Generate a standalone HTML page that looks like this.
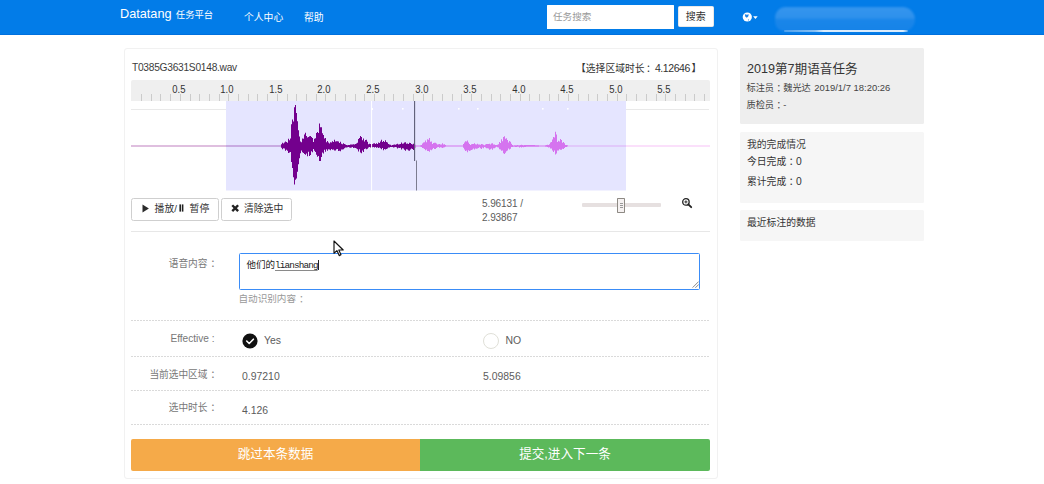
<!DOCTYPE html>
<html lang="zh-CN">
<head>
<meta charset="utf-8">
<title>Datatang 任务平台</title>
<style>
*{box-sizing:border-box;margin:0;padding:0}
html,body{width:1044px;height:484px;overflow:hidden;background:#fff}
body{position:relative;font-family:"Liberation Sans","Noto Sans CJK SC",sans-serif;font-size:9.8px;color:#333;line-height:1}
.abs{position:absolute;white-space:nowrap}
.nav{left:0;top:0;width:1044px;height:34.8px;background:#027ce8;border-bottom:1px solid #0070de}
.nav .t{color:#fff}
.brand{left:120px;top:5.5px;font-size:12.7px;line-height:16px}
.brand span{font-size:9.3px;position:relative;top:0px;margin-left:0.8px}
.nl{top:11px;font-size:9.8px;line-height:14px}
.search{left:547px;top:5px;width:127px;height:23.8px;background:#fff;border-radius:.5px}
.search span{position:absolute;left:6px;top:4.5px;font-size:9.6px;line-height:13px;color:#999}
.sbtn{left:677.6px;top:5.8px;width:36.2px;height:21.6px;background:#fff;border:1px solid #e8e8e8;border-radius:1.5px;text-align:center;font-size:10px;line-height:19.6px;color:#333}
.blur{left:775px;top:6.5px;width:140px;height:25.5px;border-radius:12px 14px 14px 12px;background:linear-gradient(180deg,#3595ee 0%,#2e91ec 44%,#1a86e9 50%,#1683e8 100%);filter:blur(1.1px)}
.blurline{left:784px;top:30.3px;width:124px;height:1.5px;background:linear-gradient(90deg,rgba(255,255,255,.25) 0%,rgba(255,255,255,.5) 25%,rgba(255,255,255,.85) 32%,rgba(255,255,255,.85) 96%,rgba(255,255,255,.3) 100%);border-radius:1px;filter:blur(.4px)}
.panel{left:124px;top:48px;width:594px;height:431px;border:1px solid #f1f1f1;border-radius:3px;background:#fff}
.fname{left:132px;top:61px;font-size:10.2px;letter-spacing:-.26px;line-height:13px;color:#3c3c3c}
.seltime{left:576px;top:61.6px;font-size:9.8px;line-height:13px;color:#333}
.timeline{left:131px;top:80px;width:579px;height:21px;background:#efefef;border-radius:2px 2px 0 0}
.wave{left:131px;top:101px;width:579px;height:90px}
.btn{top:198px;height:23px;background:#fff;border:1px solid #cfcfcf;border-radius:2.5px;font-size:9.6px;line-height:21px;color:#333;text-align:center}
.bt{top:201.9px;font-size:9.8px;line-height:13px;color:#333}
.c{position:relative;left:3px}
.n{font-size:10.5px;letter-spacing:-.42px;margin-left:.5px;margin-right:1.5px}
.hr{left:131px;width:579px;height:1px;background:#e7e7e7}
.dot{left:131px;width:579px;height:1px;background:repeating-linear-gradient(90deg,#dadada 0,#dadada 2px,transparent 2px,transparent 3px)}
.lbl{width:90px;left:127.2px;text-align:right;font-size:9.7px;line-height:13px;color:#777}
.val{font-size:10.45px;line-height:13px;color:#5c5c5c}
.side{left:739.5px;width:184.5px;border-radius:1.5px}
.big{height:31.9px;top:439.2px;font-size:12.6px;line-height:31px;color:#fff;text-align:center}
</style>
</head>
<body>
<!-- navbar -->
<div class="abs nav">
  <div class="abs t brand">Datatang <span>任务平台</span></div>
  <div class="abs t nl" style="left:244px">个人中心</div>
  <div class="abs t nl" style="left:304px">帮助</div>
  <div class="abs search"><span>任务搜索</span></div>
  <div class="abs sbtn">搜索</div>
  <svg class="abs" style="left:742px;top:10.5px" width="20" height="12" viewBox="0 0 20 12">
    <circle cx="5.3" cy="6" r="4.6" fill="#fff"/>
    <path d="M2.8 3.4 L4.2 3.2 L4.9 4.3 L5.8 3.3 L6.8 3.6 L6.2 5.6 L4.8 6.8 L3.4 5.8Z" fill="#1c82e6"/>
    <circle cx="6.5" cy="8.9" r=".55" fill="#4a9bec"/>
    <path d="M11.1 5.2 L15.7 5.2 L13.4 7.9Z" fill="#fff"/>
  </svg>
  <div class="abs blur"></div>
  <div class="abs blurline"></div>
</div>

<!-- main panel -->
<div class="abs panel"></div>
<div class="abs fname">T0385G3631S0148.wav</div>
<div class="abs seltime">【选择区域时长<span class="c" style="left:1.5px">：</span><span class="n">4.12646</span>】</div>

<svg class="abs timeline" viewBox="0 0 579 21" width="579" height="21">
  <g fill="#cbcbcb"><rect x="10" y="14" width="1" height="7"/><rect x="20" y="14" width="1" height="7"/><rect x="29" y="14" width="1" height="7"/><rect x="39" y="14" width="1" height="7"/><rect x="49" y="14" width="1" height="7"/><rect x="59" y="14" width="1" height="7"/><rect x="68" y="14" width="1" height="7"/><rect x="78" y="14" width="1" height="7"/><rect x="88" y="14" width="1" height="7"/><rect x="97" y="14" width="1" height="7"/><rect x="107" y="14" width="1" height="7"/><rect x="117" y="14" width="1" height="7"/><rect x="126" y="14" width="1" height="7"/><rect x="136" y="14" width="1" height="7"/><rect x="146" y="14" width="1" height="7"/><rect x="156" y="14" width="1" height="7"/><rect x="165" y="14" width="1" height="7"/><rect x="175" y="14" width="1" height="7"/><rect x="185" y="14" width="1" height="7"/><rect x="194" y="14" width="1" height="7"/><rect x="204" y="14" width="1" height="7"/><rect x="214" y="14" width="1" height="7"/><rect x="224" y="14" width="1" height="7"/><rect x="233" y="14" width="1" height="7"/><rect x="243" y="14" width="1" height="7"/><rect x="253" y="14" width="1" height="7"/><rect x="262" y="14" width="1" height="7"/><rect x="272" y="14" width="1" height="7"/><rect x="282" y="14" width="1" height="7"/><rect x="292" y="14" width="1" height="7"/><rect x="301" y="14" width="1" height="7"/><rect x="311" y="14" width="1" height="7"/><rect x="321" y="14" width="1" height="7"/><rect x="330" y="14" width="1" height="7"/><rect x="340" y="14" width="1" height="7"/><rect x="350" y="14" width="1" height="7"/><rect x="360" y="14" width="1" height="7"/><rect x="369" y="14" width="1" height="7"/><rect x="379" y="14" width="1" height="7"/><rect x="389" y="14" width="1" height="7"/><rect x="398" y="14" width="1" height="7"/><rect x="408" y="14" width="1" height="7"/><rect x="418" y="14" width="1" height="7"/><rect x="427" y="14" width="1" height="7"/><rect x="437" y="14" width="1" height="7"/><rect x="447" y="14" width="1" height="7"/><rect x="457" y="14" width="1" height="7"/><rect x="466" y="14" width="1" height="7"/><rect x="476" y="14" width="1" height="7"/><rect x="486" y="14" width="1" height="7"/><rect x="495" y="14" width="1" height="7"/><rect x="505" y="14" width="1" height="7"/><rect x="515" y="14" width="1" height="7"/><rect x="525" y="14" width="1" height="7"/><rect x="534" y="14" width="1" height="7"/><rect x="544" y="14" width="1" height="7"/><rect x="554" y="14" width="1" height="7"/><rect x="563" y="14" width="1" height="7"/><rect x="573" y="14" width="1" height="7"/></g>
  <g font-family="Liberation Sans, sans-serif" font-size="10" fill="#333" text-anchor="middle"><text transform="translate(47.9 12.7) scale(0.95 1)">0.5</text><text transform="translate(95.9 12.7) scale(0.95 1)">1.0</text><text transform="translate(144.9 12.7) scale(0.95 1)">1.5</text><text transform="translate(192.9 12.7) scale(0.95 1)">2.0</text><text transform="translate(241.9 12.7) scale(0.95 1)">2.5</text><text transform="translate(290.9 12.7) scale(0.95 1)">3.0</text><text transform="translate(338.9 12.7) scale(0.95 1)">3.5</text><text transform="translate(387.9 12.7) scale(0.95 1)">4.0</text><text transform="translate(435.9 12.7) scale(0.95 1)">4.5</text><text transform="translate(484.9 12.7) scale(0.95 1)">5.0</text><text transform="translate(532.9 12.7) scale(0.95 1)">5.5</text></g>
</svg>

<svg class="abs wave" viewBox="0 0 579 90" width="579" height="90">
  <rect x="0" y="8" width="95" height="1" fill="#e9e9e9"/><rect x="495" y="8" width="83" height="1" fill="#e9e9e9"/>
  
  <path d="M284.0 43.8 L285.0 43.8 L285.0 44.6 L286.0 44.6 L286.0 44.6 L287.0 44.6 L287.0 44.6 L288.0 44.6 L288.0 44.6 L289.0 44.6 L289.0 44.2 L290.0 44.2 L290.0 43.9 L291.0 43.9 L291.0 42.5 L292.0 42.5 L292.0 41.4 L293.0 41.4 L293.0 41.2 L294.0 41.2 L294.0 39.5 L295.0 39.5 L295.0 41.2 L296.0 41.2 L296.0 38.2 L297.0 38.2 L297.0 38.7 L298.0 38.7 L298.0 37.0 L299.0 37.0 L299.0 40.8 L300.0 40.8 L300.0 40.5 L301.0 40.5 L301.0 42.9 L302.0 42.9 L302.0 42.0 L303.0 42.0 L303.0 41.7 L304.0 41.7 L304.0 41.8 L305.0 41.8 L305.0 42.6 L306.0 42.6 L306.0 43.5 L307.0 43.5 L307.0 43.3 L308.0 43.3 L308.0 43.0 L309.0 43.0 L309.0 43.5 L310.0 43.5 L310.0 43.5 L311.0 43.5 L311.0 42.3 L312.0 42.3 L312.0 43.4 L313.0 43.4 L313.0 43.3 L314.0 43.3 L314.0 44.1 L315.0 44.1 L315.0 44.4 L316.0 44.4 L316.0 44.6 L317.0 44.6 L317.0 44.6 L318.0 44.6 L318.0 44.6 L319.0 44.6 L319.0 44.6 L320.0 44.6 L320.0 44.6 L321.0 44.6 L321.0 44.6 L322.0 44.6 L322.0 44.6 L323.0 44.6 L323.0 44.6 L324.0 44.6 L324.0 44.6 L325.0 44.6 L325.0 44.6 L326.0 44.6 L326.0 44.6 L327.0 44.6 L327.0 44.6 L328.0 44.6 L328.0 44.6 L329.0 44.6 L329.0 44.6 L330.0 44.6 L330.0 44.6 L331.0 44.6 L331.0 44.6 L332.0 44.6 L332.0 43.0 L333.0 43.0 L333.0 41.4 L334.0 41.4 L334.0 40.2 L335.0 40.2 L335.0 40.6 L336.0 40.6 L336.0 39.6 L337.0 39.6 L337.0 41.6 L338.0 41.6 L338.0 42.9 L339.0 42.9 L339.0 43.9 L340.0 43.9 L340.0 43.2 L341.0 43.2 L341.0 42.9 L342.0 42.9 L342.0 42.9 L343.0 42.9 L343.0 42.3 L344.0 42.3 L344.0 43.3 L345.0 43.3 L345.0 43.6 L346.0 43.6 L346.0 42.7 L347.0 42.7 L347.0 43.5 L348.0 43.5 L348.0 43.5 L349.0 43.5 L349.0 43.7 L350.0 43.7 L350.0 43.0 L351.0 43.0 L351.0 43.3 L352.0 43.3 L352.0 43.7 L353.0 43.7 L353.0 44.2 L354.0 44.2 L354.0 43.6 L355.0 43.6 L355.0 43.0 L356.0 43.0 L356.0 43.0 L357.0 43.0 L357.0 42.9 L358.0 42.9 L358.0 42.7 L359.0 42.7 L359.0 43.6 L360.0 43.6 L360.0 42.6 L361.0 42.6 L361.0 42.3 L362.0 42.3 L362.0 43.6 L363.0 43.6 L363.0 43.4 L364.0 43.4 L364.0 43.9 L365.0 43.9 L365.0 44.1 L366.0 44.1 L366.0 43.7 L367.0 43.7 L367.0 43.3 L368.0 43.3 L368.0 41.1 L369.0 41.1 L369.0 41.9 L370.0 41.9 L370.0 38.3 L371.0 38.3 L371.0 40.2 L372.0 40.2 L372.0 35.9 L373.0 35.9 L373.0 35.2 L374.0 35.2 L374.0 37.8 L375.0 37.8 L375.0 37.3 L376.0 37.3 L376.0 39.1 L377.0 39.1 L377.0 41.6 L378.0 41.6 L378.0 40.0 L379.0 40.0 L379.0 40.8 L380.0 40.8 L380.0 42.8 L381.0 42.8 L381.0 44.0 L382.0 44.0 L382.0 44.4 L383.0 44.4 L383.0 44.3 L384.0 44.3 L384.0 44.2 L385.0 44.2 L385.0 44.2 L386.0 44.2 L386.0 44.1 L387.0 44.1 L387.0 44.3 L388.0 44.3 L388.0 44.3 L389.0 44.3 L389.0 43.9 L390.0 43.9 L390.0 43.8 L391.0 43.8 L391.0 43.9 L392.0 43.9 L392.0 44.2 L393.0 44.2 L393.0 44.0 L394.0 44.0 L394.0 44.1 L395.0 44.1 L395.0 44.1 L396.0 44.1 L396.0 44.1 L397.0 44.1 L397.0 44.1 L398.0 44.1 L398.0 44.1 L399.0 44.1 L399.0 44.1 L400.0 44.1 L400.0 44.1 L401.0 44.1 L401.0 44.1 L402.0 44.1 L402.0 44.1 L403.0 44.1 L403.0 44.1 L404.0 44.1 L404.0 44.2 L405.0 44.2 L405.0 44.2 L406.0 44.2 L406.0 44.2 L407.0 44.2 L407.0 44.2 L408.0 44.2 L408.0 44.5 L409.0 44.5 L409.0 44.5 L410.0 44.5 L410.0 44.5 L411.0 44.5 L411.0 44.5 L412.0 44.5 L412.0 44.4 L413.0 44.4 L413.0 44.4 L414.0 44.4 L414.0 44.2 L415.0 44.2 L415.0 44.0 L416.0 44.0 L416.0 43.8 L417.0 43.8 L417.0 43.9 L418.0 43.9 L418.0 43.3 L419.0 43.3 L419.0 41.5 L420.0 41.5 L420.0 41.0 L421.0 41.0 L421.0 38.6 L422.0 38.6 L422.0 36.1 L423.0 36.1 L423.0 36.5 L424.0 36.5 L424.0 30.8 L425.0 30.8 L425.0 33.5 L426.0 33.5 L426.0 41.0 L427.0 41.0 L427.0 39.7 L428.0 39.7 L428.0 40.5 L429.0 40.5 L429.0 37.9 L430.0 37.9 L430.0 39.0 L431.0 39.0 L431.0 41.7 L432.0 41.7 L432.0 40.9 L433.0 40.9 L433.0 42.3 L434.0 42.3 L434.0 44.0 L435.0 44.0 L435.0 44.1 L436.0 44.1 L436.0 44.3 L437.0 44.3 L437.0 44.7 L438.0 44.7 L438.0 44.7 L439.0 44.7 L439.0 44.7 L440.0 44.7 L440.0 44.7 L441.0 44.7 L441.0 44.7 L442.0 44.7 L442.0 44.7 L443.0 44.7 L443.0 44.7 L444.0 44.7 L444.0 44.7 L445.0 44.7 L445.0 44.7 L446.0 44.7 L446.0 44.7 L447.0 44.7 L447.0 44.7 L448.0 44.7 L448.0 44.7 L449.0 44.7 L449.0 44.7 L450.0 44.7 L450.0 44.7 L451.0 44.7 L451.0 44.7 L452.0 44.7 L452.0 44.7 L453.0 44.7 L453.0 44.7 L454.0 44.7 L454.0 44.7 L455.0 44.7 L455.0 44.7 L456.0 44.7 L456.0 44.7 L457.0 44.7 L457.0 44.7 L458.0 44.7 L458.0 44.7 L459.0 44.7 L459.0 44.7 L460.0 44.7 L460.0 44.7 L461.0 44.7 L461.0 44.7 L462.0 44.7 L462.0 44.7 L463.0 44.7 L463.0 44.7 L464.0 44.7 L464.0 44.7 L465.0 44.7 L465.0 44.7 L466.0 44.7 L466.0 44.7 L467.0 44.7 L467.0 44.7 L468.0 44.7 L468.0 44.7 L469.0 44.7 L469.0 44.7 L470.0 44.7 L470.0 44.7 L471.0 44.7 L471.0 44.7 L472.0 44.7 L472.0 44.7 L473.0 44.7 L473.0 44.7 L474.0 44.7 L474.0 44.7 L475.0 44.7 L475.0 44.7 L476.0 44.7 L476.0 44.7 L477.0 44.7 L477.0 44.7 L478.0 44.7 L478.0 44.7 L479.0 44.7 L479.0 44.7 L480.0 44.7 L480.0 44.7 L481.0 44.7 L481.0 44.7 L482.0 44.7 L482.0 44.7 L483.0 44.7 L483.0 44.7 L484.0 44.7 L484.0 44.7 L485.0 44.7 L485.0 44.7 L486.0 44.7 L486.0 44.7 L487.0 44.7 L487.0 44.7 L488.0 44.7 L488.0 44.7 L489.0 44.7 L489.0 44.7 L490.0 44.7 L490.0 44.7 L491.0 44.7 L491.0 44.7 L492.0 44.7 L492.0 44.7 L493.0 44.7 L493.0 44.7 L494.0 44.7 L494.0 44.7 L495.0 44.7 L495.0 44.7 L496.0 44.7 L496.0 44.7 L497.0 44.7 L497.0 44.7 L498.0 44.7 L498.0 44.7 L499.0 44.7 L499.0 44.7 L500.0 44.7 L500.0 44.7 L501.0 44.7 L501.0 44.7 L502.0 44.7 L502.0 44.7 L503.0 44.7 L503.0 44.7 L504.0 44.7 L504.0 44.7 L505.0 44.7 L505.0 44.7 L506.0 44.7 L506.0 44.7 L507.0 44.7 L507.0 44.7 L508.0 44.7 L508.0 44.7 L509.0 44.7 L509.0 44.7 L510.0 44.7 L510.0 44.7 L511.0 44.7 L511.0 44.7 L512.0 44.7 L512.0 44.7 L513.0 44.7 L513.0 44.7 L514.0 44.7 L514.0 44.7 L515.0 44.7 L515.0 44.7 L516.0 44.7 L516.0 44.7 L517.0 44.7 L517.0 44.7 L518.0 44.7 L518.0 44.7 L519.0 44.7 L519.0 44.7 L520.0 44.7 L520.0 44.7 L521.0 44.7 L521.0 44.7 L522.0 44.7 L522.0 44.7 L523.0 44.7 L523.0 44.7 L524.0 44.7 L524.0 44.7 L525.0 44.7 L525.0 44.7 L526.0 44.7 L526.0 44.7 L527.0 44.7 L527.0 44.7 L528.0 44.7 L528.0 44.7 L529.0 44.7 L529.0 44.7 L530.0 44.7 L530.0 44.7 L531.0 44.7 L531.0 44.7 L532.0 44.7 L532.0 44.7 L533.0 44.7 L533.0 44.7 L534.0 44.7 L534.0 44.7 L535.0 44.7 L535.0 44.7 L536.0 44.7 L536.0 44.7 L537.0 44.7 L537.0 44.7 L538.0 44.7 L538.0 44.7 L539.0 44.7 L539.0 44.7 L540.0 44.7 L540.0 44.7 L541.0 44.7 L541.0 44.7 L542.0 44.7 L542.0 44.7 L543.0 44.7 L543.0 44.7 L544.0 44.7 L544.0 44.7 L545.0 44.7 L545.0 44.7 L546.0 44.7 L546.0 44.7 L547.0 44.7 L547.0 44.7 L548.0 44.7 L548.0 44.7 L549.0 44.7 L549.0 44.7 L550.0 44.7 L550.0 44.7 L551.0 44.7 L551.0 44.7 L552.0 44.7 L552.0 44.7 L553.0 44.7 L553.0 44.7 L554.0 44.7 L554.0 44.7 L555.0 44.7 L555.0 44.7 L556.0 44.7 L556.0 44.7 L557.0 44.7 L557.0 44.7 L558.0 44.7 L558.0 44.7 L559.0 44.7 L559.0 44.7 L560.0 44.7 L560.0 44.7 L561.0 44.7 L561.0 44.7 L562.0 44.7 L562.0 44.7 L563.0 44.7 L563.0 44.7 L564.0 44.7 L564.0 44.7 L565.0 44.7 L565.0 44.7 L566.0 44.7 L566.0 44.7 L567.0 44.7 L567.0 44.7 L568.0 44.7 L568.0 44.7 L569.0 44.7 L569.0 44.7 L570.0 44.7 L570.0 44.7 L571.0 44.7 L571.0 44.7 L572.0 44.7 L572.0 44.7 L573.0 44.7 L573.0 44.7 L574.0 44.7 L574.0 44.7 L575.0 44.7 L575.0 44.7 L576.0 44.7 L576.0 44.7 L577.0 44.7 L577.0 44.7 L578.0 44.7 L578.0 44.7 L579.0 44.7 L579.0 45.3 L578.0 45.3 L578.0 45.3 L577.0 45.3 L577.0 45.3 L576.0 45.3 L576.0 45.3 L575.0 45.3 L575.0 45.3 L574.0 45.3 L574.0 45.3 L573.0 45.3 L573.0 45.3 L572.0 45.3 L572.0 45.3 L571.0 45.3 L571.0 45.3 L570.0 45.3 L570.0 45.3 L569.0 45.3 L569.0 45.3 L568.0 45.3 L568.0 45.3 L567.0 45.3 L567.0 45.3 L566.0 45.3 L566.0 45.3 L565.0 45.3 L565.0 45.3 L564.0 45.3 L564.0 45.3 L563.0 45.3 L563.0 45.3 L562.0 45.3 L562.0 45.3 L561.0 45.3 L561.0 45.3 L560.0 45.3 L560.0 45.3 L559.0 45.3 L559.0 45.3 L558.0 45.3 L558.0 45.3 L557.0 45.3 L557.0 45.3 L556.0 45.3 L556.0 45.3 L555.0 45.3 L555.0 45.3 L554.0 45.3 L554.0 45.3 L553.0 45.3 L553.0 45.3 L552.0 45.3 L552.0 45.3 L551.0 45.3 L551.0 45.3 L550.0 45.3 L550.0 45.3 L549.0 45.3 L549.0 45.3 L548.0 45.3 L548.0 45.3 L547.0 45.3 L547.0 45.3 L546.0 45.3 L546.0 45.3 L545.0 45.3 L545.0 45.3 L544.0 45.3 L544.0 45.3 L543.0 45.3 L543.0 45.3 L542.0 45.3 L542.0 45.3 L541.0 45.3 L541.0 45.3 L540.0 45.3 L540.0 45.3 L539.0 45.3 L539.0 45.3 L538.0 45.3 L538.0 45.3 L537.0 45.3 L537.0 45.3 L536.0 45.3 L536.0 45.3 L535.0 45.3 L535.0 45.3 L534.0 45.3 L534.0 45.3 L533.0 45.3 L533.0 45.3 L532.0 45.3 L532.0 45.3 L531.0 45.3 L531.0 45.3 L530.0 45.3 L530.0 45.3 L529.0 45.3 L529.0 45.3 L528.0 45.3 L528.0 45.3 L527.0 45.3 L527.0 45.3 L526.0 45.3 L526.0 45.3 L525.0 45.3 L525.0 45.3 L524.0 45.3 L524.0 45.3 L523.0 45.3 L523.0 45.3 L522.0 45.3 L522.0 45.3 L521.0 45.3 L521.0 45.3 L520.0 45.3 L520.0 45.3 L519.0 45.3 L519.0 45.3 L518.0 45.3 L518.0 45.3 L517.0 45.3 L517.0 45.3 L516.0 45.3 L516.0 45.3 L515.0 45.3 L515.0 45.3 L514.0 45.3 L514.0 45.3 L513.0 45.3 L513.0 45.3 L512.0 45.3 L512.0 45.3 L511.0 45.3 L511.0 45.3 L510.0 45.3 L510.0 45.3 L509.0 45.3 L509.0 45.3 L508.0 45.3 L508.0 45.3 L507.0 45.3 L507.0 45.3 L506.0 45.3 L506.0 45.3 L505.0 45.3 L505.0 45.3 L504.0 45.3 L504.0 45.3 L503.0 45.3 L503.0 45.3 L502.0 45.3 L502.0 45.3 L501.0 45.3 L501.0 45.3 L500.0 45.3 L500.0 45.3 L499.0 45.3 L499.0 45.3 L498.0 45.3 L498.0 45.3 L497.0 45.3 L497.0 45.3 L496.0 45.3 L496.0 45.3 L495.0 45.3 L495.0 45.3 L494.0 45.3 L494.0 45.3 L493.0 45.3 L493.0 45.3 L492.0 45.3 L492.0 45.3 L491.0 45.3 L491.0 45.3 L490.0 45.3 L490.0 45.3 L489.0 45.3 L489.0 45.3 L488.0 45.3 L488.0 45.3 L487.0 45.3 L487.0 45.3 L486.0 45.3 L486.0 45.3 L485.0 45.3 L485.0 45.3 L484.0 45.3 L484.0 45.3 L483.0 45.3 L483.0 45.3 L482.0 45.3 L482.0 45.3 L481.0 45.3 L481.0 45.3 L480.0 45.3 L480.0 45.3 L479.0 45.3 L479.0 45.3 L478.0 45.3 L478.0 45.3 L477.0 45.3 L477.0 45.3 L476.0 45.3 L476.0 45.3 L475.0 45.3 L475.0 45.3 L474.0 45.3 L474.0 45.3 L473.0 45.3 L473.0 45.3 L472.0 45.3 L472.0 45.3 L471.0 45.3 L471.0 45.3 L470.0 45.3 L470.0 45.3 L469.0 45.3 L469.0 45.3 L468.0 45.3 L468.0 45.3 L467.0 45.3 L467.0 45.3 L466.0 45.3 L466.0 45.3 L465.0 45.3 L465.0 45.3 L464.0 45.3 L464.0 45.3 L463.0 45.3 L463.0 45.3 L462.0 45.3 L462.0 45.3 L461.0 45.3 L461.0 45.3 L460.0 45.3 L460.0 45.3 L459.0 45.3 L459.0 45.3 L458.0 45.3 L458.0 45.3 L457.0 45.3 L457.0 45.3 L456.0 45.3 L456.0 45.3 L455.0 45.3 L455.0 45.3 L454.0 45.3 L454.0 45.3 L453.0 45.3 L453.0 45.3 L452.0 45.3 L452.0 45.3 L451.0 45.3 L451.0 45.3 L450.0 45.3 L450.0 45.3 L449.0 45.3 L449.0 45.3 L448.0 45.3 L448.0 45.3 L447.0 45.3 L447.0 45.3 L446.0 45.3 L446.0 45.3 L445.0 45.3 L445.0 45.3 L444.0 45.3 L444.0 45.3 L443.0 45.3 L443.0 45.3 L442.0 45.3 L442.0 45.3 L441.0 45.3 L441.0 45.3 L440.0 45.3 L440.0 45.3 L439.0 45.3 L439.0 45.3 L438.0 45.3 L438.0 45.3 L437.0 45.3 L437.0 45.6 L436.0 45.6 L436.0 45.9 L435.0 45.9 L435.0 45.9 L434.0 45.9 L434.0 47.1 L433.0 47.1 L433.0 48.0 L432.0 48.0 L432.0 47.7 L431.0 47.7 L431.0 48.7 L430.0 48.7 L430.0 48.8 L429.0 48.8 L429.0 48.3 L428.0 48.3 L428.0 49.5 L427.0 49.5 L427.0 49.5 L426.0 49.5 L426.0 52.4 L425.0 52.4 L425.0 53.4 L424.0 53.4 L424.0 49.4 L423.0 49.4 L423.0 51.0 L422.0 51.0 L422.0 49.6 L421.0 49.6 L421.0 47.4 L420.0 47.4 L420.0 47.5 L419.0 47.5 L419.0 46.2 L418.0 46.2 L418.0 46.4 L417.0 46.4 L417.0 45.9 L416.0 45.9 L416.0 45.8 L415.0 45.8 L415.0 45.7 L414.0 45.7 L414.0 45.6 L413.0 45.6 L413.0 45.6 L412.0 45.6 L412.0 45.5 L411.0 45.5 L411.0 45.5 L410.0 45.5 L410.0 45.5 L409.0 45.5 L409.0 45.5 L408.0 45.5 L408.0 45.8 L407.0 45.8 L407.0 45.8 L406.0 45.8 L406.0 45.8 L405.0 45.8 L405.0 45.8 L404.0 45.8 L404.0 45.8 L403.0 45.8 L403.0 45.8 L402.0 45.8 L402.0 45.8 L401.0 45.8 L401.0 45.8 L400.0 45.8 L400.0 45.8 L399.0 45.8 L399.0 45.8 L398.0 45.8 L398.0 45.8 L397.0 45.8 L397.0 45.8 L396.0 45.8 L396.0 45.8 L395.0 45.8 L395.0 45.9 L394.0 45.9 L394.0 45.9 L393.0 45.9 L393.0 46.2 L392.0 46.2 L392.0 45.9 L391.0 45.9 L391.0 46.6 L390.0 46.6 L390.0 46.1 L389.0 46.1 L389.0 46.4 L388.0 46.4 L388.0 45.8 L387.0 45.8 L387.0 45.7 L386.0 45.7 L386.0 45.9 L385.0 45.9 L385.0 45.9 L384.0 45.9 L384.0 45.8 L383.0 45.8 L383.0 45.7 L382.0 45.7 L382.0 45.9 L381.0 45.9 L381.0 46.0 L380.0 46.0 L380.0 47.7 L379.0 47.7 L379.0 48.4 L378.0 48.4 L378.0 47.4 L377.0 47.4 L377.0 49.4 L376.0 49.4 L376.0 50.2 L375.0 50.2 L375.0 51.7 L374.0 51.7 L374.0 52.9 L373.0 52.9 L373.0 52.2 L372.0 52.2 L372.0 49.6 L371.0 49.6 L371.0 49.8 L370.0 49.8 L370.0 48.6 L369.0 48.6 L369.0 48.2 L368.0 48.2 L368.0 46.4 L367.0 46.4 L367.0 46.3 L366.0 46.3 L366.0 45.8 L365.0 45.8 L365.0 46.5 L364.0 46.5 L364.0 47.3 L363.0 47.3 L363.0 47.3 L362.0 47.3 L362.0 48.8 L361.0 48.8 L361.0 47.6 L360.0 47.6 L360.0 48.2 L359.0 48.2 L359.0 48.8 L358.0 48.8 L358.0 47.5 L357.0 47.5 L357.0 47.2 L356.0 47.2 L356.0 47.2 L355.0 47.2 L355.0 46.4 L354.0 46.4 L354.0 45.9 L353.0 45.9 L353.0 47.2 L352.0 47.2 L352.0 46.5 L351.0 46.5 L351.0 47.9 L350.0 47.9 L350.0 47.3 L349.0 47.3 L349.0 46.3 L348.0 46.3 L348.0 46.9 L347.0 46.9 L347.0 47.6 L346.0 47.6 L346.0 47.7 L345.0 47.7 L345.0 47.4 L344.0 47.4 L344.0 48.6 L343.0 48.6 L343.0 47.6 L342.0 47.6 L342.0 48.5 L341.0 48.5 L341.0 49.1 L340.0 49.1 L340.0 49.5 L339.0 49.5 L339.0 49.9 L338.0 49.9 L338.0 49.3 L337.0 49.3 L337.0 51.2 L336.0 51.2 L336.0 49.6 L335.0 49.6 L335.0 50.0 L334.0 50.0 L334.0 48.5 L333.0 48.5 L333.0 46.7 L332.0 46.7 L332.0 45.4 L331.0 45.4 L331.0 45.4 L330.0 45.4 L330.0 45.4 L329.0 45.4 L329.0 45.4 L328.0 45.4 L328.0 45.4 L327.0 45.4 L327.0 45.4 L326.0 45.4 L326.0 45.4 L325.0 45.4 L325.0 45.4 L324.0 45.4 L324.0 45.4 L323.0 45.4 L323.0 45.4 L322.0 45.4 L322.0 45.4 L321.0 45.4 L321.0 45.4 L320.0 45.4 L320.0 45.4 L319.0 45.4 L319.0 45.4 L318.0 45.4 L318.0 45.4 L317.0 45.4 L317.0 45.4 L316.0 45.4 L316.0 45.5 L315.0 45.5 L315.0 45.8 L314.0 45.8 L314.0 46.2 L313.0 46.2 L313.0 46.5 L312.0 46.5 L312.0 47.0 L311.0 47.0 L311.0 46.5 L310.0 46.5 L310.0 46.2 L309.0 46.2 L309.0 46.7 L308.0 46.7 L308.0 46.1 L307.0 46.1 L307.0 46.2 L306.0 46.2 L306.0 47.1 L305.0 47.1 L305.0 47.9 L304.0 47.9 L304.0 48.1 L303.0 48.1 L303.0 46.9 L302.0 46.9 L302.0 48.3 L301.0 48.3 L301.0 49.2 L300.0 49.2 L300.0 48.7 L299.0 48.7 L299.0 50.8 L298.0 50.8 L298.0 50.0 L297.0 50.0 L297.0 50.1 L296.0 50.1 L296.0 48.6 L295.0 48.6 L295.0 49.2 L294.0 49.2 L294.0 47.9 L293.0 47.9 L293.0 47.2 L292.0 47.2 L292.0 47.1 L291.0 47.1 L291.0 46.1 L290.0 46.1 L290.0 45.8 L289.0 45.8 L289.0 45.4 L288.0 45.4 L288.0 45.4 L287.0 45.4 L287.0 45.4 L286.0 45.4 L286.0 45.4 L285.0 45.4 L285.0 46.7 L284.0 46.7Z" fill="#ee82ee"/>
  <path d="M0.0 44.7 L1.0 44.7 L1.0 44.7 L2.0 44.7 L2.0 44.7 L3.0 44.7 L3.0 44.7 L4.0 44.7 L4.0 44.7 L5.0 44.7 L5.0 44.7 L6.0 44.7 L6.0 44.7 L7.0 44.7 L7.0 44.7 L8.0 44.7 L8.0 44.7 L9.0 44.7 L9.0 44.7 L10.0 44.7 L10.0 44.7 L11.0 44.7 L11.0 44.7 L12.0 44.7 L12.0 44.7 L13.0 44.7 L13.0 44.7 L14.0 44.7 L14.0 44.7 L15.0 44.7 L15.0 44.7 L16.0 44.7 L16.0 44.7 L17.0 44.7 L17.0 44.7 L18.0 44.7 L18.0 44.7 L19.0 44.7 L19.0 44.7 L20.0 44.7 L20.0 44.7 L21.0 44.7 L21.0 44.7 L22.0 44.7 L22.0 44.7 L23.0 44.7 L23.0 44.7 L24.0 44.7 L24.0 44.7 L25.0 44.7 L25.0 44.7 L26.0 44.7 L26.0 44.7 L27.0 44.7 L27.0 44.7 L28.0 44.7 L28.0 44.7 L29.0 44.7 L29.0 44.7 L30.0 44.7 L30.0 44.7 L31.0 44.7 L31.0 44.7 L32.0 44.7 L32.0 44.7 L33.0 44.7 L33.0 44.7 L34.0 44.7 L34.0 44.7 L35.0 44.7 L35.0 44.7 L36.0 44.7 L36.0 44.7 L37.0 44.7 L37.0 44.7 L38.0 44.7 L38.0 44.7 L39.0 44.7 L39.0 44.7 L40.0 44.7 L40.0 44.7 L41.0 44.7 L41.0 44.7 L42.0 44.7 L42.0 44.7 L43.0 44.7 L43.0 44.7 L44.0 44.7 L44.0 44.7 L45.0 44.7 L45.0 44.7 L46.0 44.7 L46.0 44.7 L47.0 44.7 L47.0 44.7 L48.0 44.7 L48.0 44.7 L49.0 44.7 L49.0 44.7 L50.0 44.7 L50.0 44.7 L51.0 44.7 L51.0 44.7 L52.0 44.7 L52.0 44.7 L53.0 44.7 L53.0 44.7 L54.0 44.7 L54.0 44.7 L55.0 44.7 L55.0 44.7 L56.0 44.7 L56.0 44.7 L57.0 44.7 L57.0 44.7 L58.0 44.7 L58.0 44.7 L59.0 44.7 L59.0 44.7 L60.0 44.7 L60.0 44.7 L61.0 44.7 L61.0 44.7 L62.0 44.7 L62.0 44.7 L63.0 44.7 L63.0 44.7 L64.0 44.7 L64.0 44.7 L65.0 44.7 L65.0 44.7 L66.0 44.7 L66.0 44.7 L67.0 44.7 L67.0 44.7 L68.0 44.7 L68.0 44.7 L69.0 44.7 L69.0 44.7 L70.0 44.7 L70.0 44.7 L71.0 44.7 L71.0 44.7 L72.0 44.7 L72.0 44.7 L73.0 44.7 L73.0 44.7 L74.0 44.7 L74.0 44.7 L75.0 44.7 L75.0 44.7 L76.0 44.7 L76.0 44.7 L77.0 44.7 L77.0 44.7 L78.0 44.7 L78.0 44.7 L79.0 44.7 L79.0 44.7 L80.0 44.7 L80.0 44.7 L81.0 44.7 L81.0 44.7 L82.0 44.7 L82.0 44.7 L83.0 44.7 L83.0 44.7 L84.0 44.7 L84.0 44.7 L85.0 44.7 L85.0 44.7 L86.0 44.7 L86.0 44.7 L87.0 44.7 L87.0 44.7 L88.0 44.7 L88.0 44.7 L89.0 44.7 L89.0 44.7 L90.0 44.7 L90.0 44.7 L91.0 44.7 L91.0 44.7 L92.0 44.7 L92.0 44.7 L93.0 44.7 L93.0 44.7 L94.0 44.7 L94.0 44.7 L95.0 44.7 L95.0 44.7 L96.0 44.7 L96.0 44.7 L97.0 44.7 L97.0 44.7 L98.0 44.7 L98.0 44.7 L99.0 44.7 L99.0 44.7 L100.0 44.7 L100.0 44.7 L101.0 44.7 L101.0 44.7 L102.0 44.7 L102.0 44.7 L103.0 44.7 L103.0 44.7 L104.0 44.7 L104.0 44.7 L105.0 44.7 L105.0 44.7 L106.0 44.7 L106.0 44.7 L107.0 44.7 L107.0 44.7 L108.0 44.7 L108.0 44.7 L109.0 44.7 L109.0 44.7 L110.0 44.7 L110.0 44.7 L111.0 44.7 L111.0 44.7 L112.0 44.7 L112.0 44.7 L113.0 44.7 L113.0 44.7 L114.0 44.7 L114.0 44.7 L115.0 44.7 L115.0 44.7 L116.0 44.7 L116.0 44.7 L117.0 44.7 L117.0 44.7 L118.0 44.7 L118.0 44.7 L119.0 44.7 L119.0 44.7 L120.0 44.7 L120.0 44.7 L121.0 44.7 L121.0 44.7 L122.0 44.7 L122.0 44.7 L123.0 44.7 L123.0 44.7 L124.0 44.7 L124.0 44.7 L125.0 44.7 L125.0 44.7 L126.0 44.7 L126.0 44.7 L127.0 44.7 L127.0 44.7 L128.0 44.7 L128.0 44.7 L129.0 44.7 L129.0 44.7 L130.0 44.7 L130.0 44.7 L131.0 44.7 L131.0 44.7 L132.0 44.7 L132.0 44.7 L133.0 44.7 L133.0 44.7 L134.0 44.7 L134.0 44.7 L135.0 44.7 L135.0 44.7 L136.0 44.7 L136.0 44.7 L137.0 44.7 L137.0 44.7 L138.0 44.7 L138.0 44.7 L139.0 44.7 L139.0 44.7 L140.0 44.7 L140.0 44.7 L141.0 44.7 L141.0 44.7 L142.0 44.7 L142.0 44.7 L143.0 44.7 L143.0 44.7 L144.0 44.7 L144.0 44.7 L145.0 44.7 L145.0 44.7 L146.0 44.7 L146.0 44.7 L147.0 44.7 L147.0 44.7 L148.0 44.7 L148.0 44.7 L149.0 44.7 L149.0 44.7 L150.0 44.7 L150.0 43.3 L151.0 43.3 L151.0 41.8 L152.0 41.8 L152.0 42.5 L153.0 42.5 L153.0 41.6 L154.0 41.6 L154.0 40.5 L155.0 40.5 L155.0 40.9 L156.0 40.9 L156.0 41.7 L157.0 41.7 L157.0 37.7 L158.0 37.7 L158.0 39.3 L159.0 39.3 L159.0 37.6 L160.0 37.6 L160.0 23.3 L161.0 23.3 L161.0 18.4 L162.0 18.4 L162.0 20.4 L163.0 20.4 L163.0 6.3 L164.0 6.3 L164.0 3.9 L165.0 3.9 L165.0 11.9 L166.0 11.9 L166.0 20.3 L167.0 20.3 L167.0 29.3 L168.0 29.3 L168.0 35.4 L169.0 35.4 L169.0 40.4 L170.0 40.4 L170.0 41.2 L171.0 41.2 L171.0 37.6 L172.0 37.6 L172.0 37.7 L173.0 37.7 L173.0 33.6 L174.0 33.6 L174.0 31.8 L175.0 31.8 L175.0 35.1 L176.0 35.1 L176.0 36.4 L177.0 36.4 L177.0 36.0 L178.0 36.0 L178.0 35.3 L179.0 35.3 L179.0 35.0 L180.0 35.0 L180.0 36.1 L181.0 36.1 L181.0 37.0 L182.0 37.0 L182.0 41.1 L183.0 41.1 L183.0 37.8 L184.0 37.8 L184.0 37.2 L185.0 37.2 L185.0 32.1 L186.0 32.1 L186.0 31.0 L187.0 31.0 L187.0 31.9 L188.0 31.9 L188.0 22.6 L189.0 22.6 L189.0 26.3 L190.0 26.3 L190.0 26.3 L191.0 26.3 L191.0 32.2 L192.0 32.2 L192.0 34.0 L193.0 34.0 L193.0 37.4 L194.0 37.4 L194.0 37.0 L195.0 37.0 L195.0 41.3 L196.0 41.3 L196.0 40.0 L197.0 40.0 L197.0 41.5 L198.0 41.5 L198.0 42.4 L199.0 42.4 L199.0 41.3 L200.0 41.3 L200.0 41.6 L201.0 41.6 L201.0 40.3 L202.0 40.3 L202.0 41.1 L203.0 41.1 L203.0 38.8 L204.0 38.8 L204.0 40.4 L205.0 40.4 L205.0 40.3 L206.0 40.3 L206.0 40.2 L207.0 40.2 L207.0 40.6 L208.0 40.6 L208.0 41.9 L209.0 41.9 L209.0 40.8 L210.0 40.8 L210.0 42.7 L211.0 42.7 L211.0 43.2 L212.0 43.2 L212.0 42.3 L213.0 42.3 L213.0 43.1 L214.0 43.1 L214.0 43.5 L215.0 43.5 L215.0 44.0 L216.0 44.0 L216.0 44.3 L217.0 44.3 L217.0 44.1 L218.0 44.1 L218.0 43.9 L219.0 43.9 L219.0 43.5 L220.0 43.5 L220.0 43.5 L221.0 43.5 L221.0 43.6 L222.0 43.6 L222.0 43.3 L223.0 43.3 L223.0 43.4 L224.0 43.4 L224.0 43.0 L225.0 43.0 L225.0 42.6 L226.0 42.6 L226.0 41.8 L227.0 41.8 L227.0 37.9 L228.0 37.9 L228.0 37.0 L229.0 37.0 L229.0 35.0 L230.0 35.0 L230.0 36.1 L231.0 36.1 L231.0 39.2 L232.0 39.2 L232.0 37.4 L233.0 37.4 L233.0 40.5 L234.0 40.5 L234.0 38.9 L235.0 38.9 L235.0 38.8 L236.0 38.8 L236.0 40.7 L237.0 40.7 L237.0 43.3 L238.0 43.3 L238.0 42.8 L239.0 42.8 L239.0 43.0 L240.0 43.0 L240.0 43.5 L241.0 43.5 L241.0 42.9 L242.0 42.9 L242.0 42.6 L243.0 42.6 L243.0 42.3 L244.0 42.3 L244.0 42.9 L245.0 42.9 L245.0 42.2 L246.0 42.2 L246.0 43.1 L247.0 43.1 L247.0 41.4 L248.0 41.4 L248.0 41.9 L249.0 41.9 L249.0 40.4 L250.0 40.4 L250.0 38.7 L251.0 38.7 L251.0 41.1 L252.0 41.1 L252.0 39.9 L253.0 39.9 L253.0 40.9 L254.0 40.9 L254.0 39.2 L255.0 39.2 L255.0 41.0 L256.0 41.0 L256.0 41.4 L257.0 41.4 L257.0 42.9 L258.0 42.9 L258.0 43.4 L259.0 43.4 L259.0 43.7 L260.0 43.7 L260.0 44.4 L261.0 44.4 L261.0 44.0 L262.0 44.0 L262.0 43.7 L263.0 43.7 L263.0 43.6 L264.0 43.6 L264.0 43.7 L265.0 43.7 L265.0 43.3 L266.0 43.3 L266.0 42.7 L267.0 42.7 L267.0 43.5 L268.0 43.5 L268.0 43.2 L269.0 43.2 L269.0 43.1 L270.0 43.1 L270.0 41.6 L271.0 41.6 L271.0 42.8 L272.0 42.8 L272.0 42.4 L273.0 42.4 L273.0 41.5 L274.0 41.5 L274.0 41.3 L275.0 41.3 L275.0 42.8 L276.0 42.8 L276.0 42.5 L277.0 42.5 L277.0 43.0 L278.0 43.0 L278.0 41.7 L279.0 41.7 L279.0 42.0 L280.0 42.0 L280.0 42.9 L281.0 42.9 L281.0 43.5 L282.0 43.5 L282.0 42.7 L283.0 42.7 L283.0 42.9 L284.0 42.9 L284.0 48.4 L283.0 48.4 L283.0 48.9 L282.0 48.9 L282.0 47.9 L281.0 47.9 L281.0 47.6 L280.0 47.6 L280.0 48.5 L279.0 48.5 L279.0 49.8 L278.0 49.8 L278.0 49.5 L277.0 49.5 L277.0 48.4 L276.0 48.4 L276.0 48.2 L275.0 48.2 L275.0 49.8 L274.0 49.8 L274.0 48.8 L273.0 48.8 L273.0 47.4 L272.0 47.4 L272.0 47.3 L271.0 47.3 L271.0 48.5 L270.0 48.5 L270.0 46.7 L269.0 46.7 L269.0 47.1 L268.0 47.1 L268.0 46.7 L267.0 46.7 L267.0 47.4 L266.0 47.4 L266.0 46.3 L265.0 46.3 L265.0 46.1 L264.0 46.1 L264.0 46.2 L263.0 46.2 L263.0 46.4 L262.0 46.4 L262.0 46.1 L261.0 46.1 L261.0 46.0 L260.0 46.0 L260.0 46.1 L259.0 46.1 L259.0 46.4 L258.0 46.4 L258.0 46.6 L257.0 46.6 L257.0 47.6 L256.0 47.6 L256.0 48.0 L255.0 48.0 L255.0 48.5 L254.0 48.5 L254.0 48.0 L253.0 48.0 L253.0 49.3 L252.0 49.3 L252.0 47.1 L251.0 47.1 L251.0 48.3 L250.0 48.3 L250.0 47.2 L249.0 47.2 L249.0 46.6 L248.0 46.6 L248.0 47.1 L247.0 47.1 L247.0 46.2 L246.0 46.2 L246.0 46.7 L245.0 46.7 L245.0 46.1 L244.0 46.1 L244.0 46.4 L243.0 46.4 L243.0 45.9 L242.0 45.9 L242.0 46.2 L241.0 46.2 L241.0 46.0 L240.0 46.0 L240.0 46.6 L239.0 46.6 L239.0 46.1 L238.0 46.1 L238.0 46.6 L237.0 46.6 L237.0 47.7 L236.0 47.7 L236.0 48.3 L235.0 48.3 L235.0 47.6 L234.0 47.6 L234.0 48.0 L233.0 48.0 L233.0 51.1 L232.0 51.1 L232.0 49.4 L231.0 49.4 L231.0 52.2 L230.0 52.2 L230.0 51.5 L229.0 51.5 L229.0 48.2 L228.0 48.2 L228.0 50.5 L227.0 50.5 L227.0 48.3 L226.0 48.3 L226.0 47.5 L225.0 47.5 L225.0 47.0 L224.0 47.0 L224.0 46.8 L223.0 46.8 L223.0 47.0 L222.0 47.0 L222.0 46.1 L221.0 46.1 L221.0 46.4 L220.0 46.4 L220.0 46.7 L219.0 46.7 L219.0 46.5 L218.0 46.5 L218.0 46.1 L217.0 46.1 L217.0 46.2 L216.0 46.2 L216.0 46.4 L215.0 46.4 L215.0 46.5 L214.0 46.5 L214.0 47.2 L213.0 47.2 L213.0 48.3 L212.0 48.3 L212.0 48.4 L211.0 48.4 L211.0 48.6 L210.0 48.6 L210.0 50.3 L209.0 50.3 L209.0 49.7 L208.0 49.7 L208.0 50.1 L207.0 50.1 L207.0 47.9 L206.0 47.9 L206.0 48.3 L205.0 48.3 L205.0 49.4 L204.0 49.4 L204.0 49.6 L203.0 49.6 L203.0 48.6 L202.0 48.6 L202.0 48.8 L201.0 48.8 L201.0 47.9 L200.0 47.9 L200.0 49.2 L199.0 49.2 L199.0 48.5 L198.0 48.5 L198.0 48.3 L197.0 48.3 L197.0 49.7 L196.0 49.7 L196.0 48.3 L195.0 48.3 L195.0 50.8 L194.0 50.8 L194.0 48.8 L193.0 48.8 L193.0 52.4 L192.0 52.4 L192.0 51.5 L191.0 51.5 L191.0 56.1 L190.0 56.1 L190.0 60.1 L189.0 60.1 L189.0 60.1 L188.0 60.1 L188.0 55.1 L187.0 55.1 L187.0 55.8 L186.0 55.8 L186.0 53.7 L185.0 53.7 L185.0 51.1 L184.0 51.1 L184.0 49.8 L183.0 49.8 L183.0 47.9 L182.0 47.9 L182.0 51.2 L181.0 51.2 L181.0 50.2 L180.0 50.2 L180.0 53.9 L179.0 53.9 L179.0 54.9 L178.0 54.9 L178.0 50.8 L177.0 50.8 L177.0 55.3 L176.0 55.3 L176.0 52.4 L175.0 52.4 L175.0 53.7 L174.0 53.7 L174.0 52.9 L173.0 52.9 L173.0 52.0 L172.0 52.0 L172.0 51.2 L171.0 51.2 L171.0 49.4 L170.0 49.4 L170.0 52.3 L169.0 52.3 L169.0 57.2 L168.0 57.2 L168.0 63.3 L167.0 63.3 L167.0 70.8 L166.0 70.8 L166.0 77.5 L165.0 77.5 L165.0 78.7 L164.0 78.7 L164.0 83.4 L163.0 83.4 L163.0 76.2 L162.0 76.2 L162.0 67.1 L161.0 67.1 L161.0 60.9 L160.0 60.9 L160.0 51.0 L159.0 51.0 L159.0 51.4 L158.0 51.4 L158.0 52.0 L157.0 52.0 L157.0 49.7 L156.0 49.7 L156.0 48.8 L155.0 48.8 L155.0 49.7 L154.0 49.7 L154.0 47.4 L153.0 47.4 L153.0 47.3 L152.0 47.3 L152.0 48.2 L151.0 48.2 L151.0 46.7 L150.0 46.7 L150.0 45.3 L149.0 45.3 L149.0 45.3 L148.0 45.3 L148.0 45.3 L147.0 45.3 L147.0 45.3 L146.0 45.3 L146.0 45.3 L145.0 45.3 L145.0 45.3 L144.0 45.3 L144.0 45.3 L143.0 45.3 L143.0 45.3 L142.0 45.3 L142.0 45.3 L141.0 45.3 L141.0 45.3 L140.0 45.3 L140.0 45.3 L139.0 45.3 L139.0 45.3 L138.0 45.3 L138.0 45.3 L137.0 45.3 L137.0 45.3 L136.0 45.3 L136.0 45.3 L135.0 45.3 L135.0 45.3 L134.0 45.3 L134.0 45.3 L133.0 45.3 L133.0 45.3 L132.0 45.3 L132.0 45.3 L131.0 45.3 L131.0 45.3 L130.0 45.3 L130.0 45.3 L129.0 45.3 L129.0 45.3 L128.0 45.3 L128.0 45.3 L127.0 45.3 L127.0 45.3 L126.0 45.3 L126.0 45.3 L125.0 45.3 L125.0 45.3 L124.0 45.3 L124.0 45.3 L123.0 45.3 L123.0 45.3 L122.0 45.3 L122.0 45.3 L121.0 45.3 L121.0 45.3 L120.0 45.3 L120.0 45.3 L119.0 45.3 L119.0 45.3 L118.0 45.3 L118.0 45.3 L117.0 45.3 L117.0 45.3 L116.0 45.3 L116.0 45.3 L115.0 45.3 L115.0 45.3 L114.0 45.3 L114.0 45.3 L113.0 45.3 L113.0 45.3 L112.0 45.3 L112.0 45.3 L111.0 45.3 L111.0 45.3 L110.0 45.3 L110.0 45.3 L109.0 45.3 L109.0 45.3 L108.0 45.3 L108.0 45.3 L107.0 45.3 L107.0 45.3 L106.0 45.3 L106.0 45.3 L105.0 45.3 L105.0 45.3 L104.0 45.3 L104.0 45.3 L103.0 45.3 L103.0 45.3 L102.0 45.3 L102.0 45.3 L101.0 45.3 L101.0 45.3 L100.0 45.3 L100.0 45.3 L99.0 45.3 L99.0 45.3 L98.0 45.3 L98.0 45.3 L97.0 45.3 L97.0 45.3 L96.0 45.3 L96.0 45.3 L95.0 45.3 L95.0 45.3 L94.0 45.3 L94.0 45.3 L93.0 45.3 L93.0 45.3 L92.0 45.3 L92.0 45.3 L91.0 45.3 L91.0 45.3 L90.0 45.3 L90.0 45.3 L89.0 45.3 L89.0 45.3 L88.0 45.3 L88.0 45.3 L87.0 45.3 L87.0 45.3 L86.0 45.3 L86.0 45.3 L85.0 45.3 L85.0 45.3 L84.0 45.3 L84.0 45.3 L83.0 45.3 L83.0 45.3 L82.0 45.3 L82.0 45.3 L81.0 45.3 L81.0 45.3 L80.0 45.3 L80.0 45.3 L79.0 45.3 L79.0 45.3 L78.0 45.3 L78.0 45.3 L77.0 45.3 L77.0 45.3 L76.0 45.3 L76.0 45.3 L75.0 45.3 L75.0 45.3 L74.0 45.3 L74.0 45.3 L73.0 45.3 L73.0 45.3 L72.0 45.3 L72.0 45.3 L71.0 45.3 L71.0 45.3 L70.0 45.3 L70.0 45.3 L69.0 45.3 L69.0 45.3 L68.0 45.3 L68.0 45.3 L67.0 45.3 L67.0 45.3 L66.0 45.3 L66.0 45.3 L65.0 45.3 L65.0 45.3 L64.0 45.3 L64.0 45.3 L63.0 45.3 L63.0 45.3 L62.0 45.3 L62.0 45.3 L61.0 45.3 L61.0 45.3 L60.0 45.3 L60.0 45.3 L59.0 45.3 L59.0 45.3 L58.0 45.3 L58.0 45.3 L57.0 45.3 L57.0 45.3 L56.0 45.3 L56.0 45.3 L55.0 45.3 L55.0 45.3 L54.0 45.3 L54.0 45.3 L53.0 45.3 L53.0 45.3 L52.0 45.3 L52.0 45.3 L51.0 45.3 L51.0 45.3 L50.0 45.3 L50.0 45.3 L49.0 45.3 L49.0 45.3 L48.0 45.3 L48.0 45.3 L47.0 45.3 L47.0 45.3 L46.0 45.3 L46.0 45.3 L45.0 45.3 L45.0 45.3 L44.0 45.3 L44.0 45.3 L43.0 45.3 L43.0 45.3 L42.0 45.3 L42.0 45.3 L41.0 45.3 L41.0 45.3 L40.0 45.3 L40.0 45.3 L39.0 45.3 L39.0 45.3 L38.0 45.3 L38.0 45.3 L37.0 45.3 L37.0 45.3 L36.0 45.3 L36.0 45.3 L35.0 45.3 L35.0 45.3 L34.0 45.3 L34.0 45.3 L33.0 45.3 L33.0 45.3 L32.0 45.3 L32.0 45.3 L31.0 45.3 L31.0 45.3 L30.0 45.3 L30.0 45.3 L29.0 45.3 L29.0 45.3 L28.0 45.3 L28.0 45.3 L27.0 45.3 L27.0 45.3 L26.0 45.3 L26.0 45.3 L25.0 45.3 L25.0 45.3 L24.0 45.3 L24.0 45.3 L23.0 45.3 L23.0 45.3 L22.0 45.3 L22.0 45.3 L21.0 45.3 L21.0 45.3 L20.0 45.3 L20.0 45.3 L19.0 45.3 L19.0 45.3 L18.0 45.3 L18.0 45.3 L17.0 45.3 L17.0 45.3 L16.0 45.3 L16.0 45.3 L15.0 45.3 L15.0 45.3 L14.0 45.3 L14.0 45.3 L13.0 45.3 L13.0 45.3 L12.0 45.3 L12.0 45.3 L11.0 45.3 L11.0 45.3 L10.0 45.3 L10.0 45.3 L9.0 45.3 L9.0 45.3 L8.0 45.3 L8.0 45.3 L7.0 45.3 L7.0 45.3 L6.0 45.3 L6.0 45.3 L5.0 45.3 L5.0 45.3 L4.0 45.3 L4.0 45.3 L3.0 45.3 L3.0 45.3 L2.0 45.3 L2.0 45.3 L1.0 45.3 L1.0 45.3 L0.0 45.3Z" fill="#800080"/>
  <rect x="95" y="0" width="400" height="89.5" fill="rgba(0,0,255,0.1)"/>
  <g fill="#fff"><rect x="240" y="7" width="2" height="2"/><rect x="271" y="7" width="1.6" height="1.6"/><rect x="327" y="7" width="1.6" height="1.6"/><rect x="346" y="7" width="1.6" height="1.6"/><rect x="411" y="7" width="1.6" height="1.6"/><rect x="436" y="7" width="1.6" height="1.6"/></g>
  <rect x="240" y="0" width="1.1" height="89.5" fill="#fff" opacity=".9"/>
  <rect x="283" y="0" width="1" height="60" fill="#62627c"/><rect x="284" y="0" width="1" height="60" fill="#62627c" opacity=".15"/>
  <rect x="285" y="59.5" width="1" height="30" fill="#7c7c90"/>
</svg>

<!-- controls -->
<div class="abs btn" style="left:131px;width:88px"></div>
<svg class="abs" style="left:142px;top:203.6px" width="8" height="9" viewBox="0 0 8 9"><path d="M0.5 0.6 L6.9 4.5 L0.5 8.4Z" fill="#2b2b2b"/></svg>
<div class="abs bt" style="left:154.6px">播放/</div>
<svg class="abs" style="left:179px;top:204px" width="5" height="8" viewBox="0 0 5 8"><rect x=".4" y=".4" width="1.6" height="7.2" fill="#222"/><rect x="2.8" y=".4" width="1.6" height="7.2" fill="#222"/></svg>
<div class="abs bt" style="left:189.6px">暂停</div>
<div class="abs btn" style="left:221px;width:71px"></div>
<svg class="abs" style="left:230.8px;top:203.8px" width="8.4" height="8.4" viewBox="0 0 8 8"><path d="M1.2 1.2 L6.8 6.8 M6.8 1.2 L1.2 6.8" stroke="#222" stroke-width="2.3"/></svg>
<div class="abs bt" style="left:244px">清除选中</div>
<div class="abs val" style="left:482px;top:197px;font-size:10px;letter-spacing:-.1px;line-height:13.7px;white-space:normal;width:60px">5.96131 / 2.93867</div>
<div class="abs" style="left:582px;top:203.2px;width:79px;height:3.6px;background:#e6e0e0;border-radius:1px"></div>
<div class="abs" style="left:617px;top:198px;width:8px;height:14.6px;background:#f5f1f1;border:1px solid #8e8a84;border-radius:.8px"></div>
<div class="abs" style="left:619.5px;top:203px;width:3px;height:1px;background:#999;box-shadow:0 2px 0 #999,0 4px 0 #999"></div>
<svg class="abs" style="left:681px;top:197.3px" width="11.9" height="11.9" viewBox="0 0 14 14">
  <circle cx="5.8" cy="5.8" r="3.8" fill="none" stroke="#222" stroke-width="1.55"/>
  <path d="M8.6 8.6 L12 12" stroke="#222" stroke-width="2.2" stroke-linecap="round"/>
  <path d="M4 5.8 H7.6 M5.8 4 V7.6" stroke="#222" stroke-width="1.1"/>
</svg>
<div class="abs hr" style="top:231px"></div>

<!-- form -->
<div class="abs lbl" style="top:257px">语音内容<span class="c">：</span></div>
<div class="abs" style="left:238.5px;top:252.7px;width:461.5px;height:37.3px;border:1.3px solid #3a8cf7;border-radius:1.5px;background:#fff"></div>
<div class="abs" style="left:246.5px;top:258px;font-size:9.5px;font-weight:400;line-height:13px;color:#222">他们的<span style="font-family:'Liberation Mono',monospace;font-weight:400;font-size:9.4px;letter-spacing:-.89px;color:#222;text-decoration:underline;text-decoration-color:#8a8a8a;text-decoration-thickness:1px;text-underline-offset:1.5px">lianshang</span></div>
<div class="abs" style="left:318px;top:260px;width:1px;height:10px;background:#222"></div>
<svg class="abs" style="left:691.6px;top:281.4px" width="7" height="7" viewBox="0 0 7 7"><path d="M6.6 0.6 L0.6 6.6 M6.8 3.4 L3.4 6.8" stroke="#7a7a7a" stroke-width=".9"/></svg>
<div class="abs" style="left:238.5px;top:292px;font-size:9.6px;line-height:13px;color:#999">自动识别内容<span class="c">：</span></div>
<div class="abs dot" style="top:320px"></div>

<div class="abs lbl" style="top:331.5px;left:124.6px;font-size:10.1px">Effective :</div>
<svg class="abs" style="left:241.5px;top:333px" width="16" height="16" viewBox="0 0 16 16"><circle cx="8" cy="8" r="7.6" fill="#111"/><path d="M4.7 8 L7.2 10.5 L11.4 6.2" fill="none" stroke="#fff" stroke-width="1.6" stroke-linecap="round" stroke-linejoin="round"/></svg>
<div class="abs val" style="left:264px;top:333.5px">Yes</div>
<div class="abs" style="left:483px;top:333px;width:16px;height:16px;border:1px solid #e0e0d8;border-radius:50%;background:#fff"></div>
<div class="abs val" style="left:505.5px;top:333.5px">NO</div>
<div class="abs dot" style="top:356px"></div>

<div class="abs lbl" style="top:367.6px">当前选中区域<span class="c">：</span></div>
<div class="abs val" style="left:242px;top:369.5px">0.97210</div>
<div class="abs val" style="left:483px;top:369.5px">5.09856</div>
<div class="abs dot" style="top:390px"></div>

<div class="abs lbl" style="top:401.1px">选中时长<span class="c">：</span></div>
<div class="abs val" style="left:242px;top:403.5px">4.126</div>
<div class="abs dot" style="top:424px"></div>

<div class="abs big" style="left:131px;width:289px;background:#f5aa49;border-radius:2px 0 0 2px">跳过本条数据</div>
<div class="abs big" style="left:420px;width:290px;background:#5cb95b;border-radius:0 2px 2px 0">提交,进入下一条</div>

<!-- sidebar -->
<div class="abs side" style="top:48px;height:76px;background:#eee"></div>
<div class="abs" style="left:747px;top:61px;font-size:12.6px;line-height:16px;color:#333">2019第7期语音任务</div>
<div class="abs" style="left:746.5px;top:81.4px;font-size:9.2px;line-height:13px;color:#444">标注员<span class="c" style="left:2.5px">：</span>魏光达 <span style="font-size:9.45px;margin-left:.8px">2019/1/7 18:20:26</span></div>
<div class="abs" style="left:746.5px;top:98.6px;font-size:9.2px;line-height:13px;color:#444">质检员<span class="c" style="left:2.5px">：</span>-</div>

<div class="abs side" style="top:132px;height:71px;background:#f6f6f6"></div>
<div class="abs" style="left:747px;top:137.5px;font-size:9.8px;line-height:13px;color:#3c3c3c">我的完成情况</div>
<div class="abs" style="left:747px;top:154.5px;font-size:9.8px;line-height:13px;color:#333">今日完成<span class="c" style="left:2.5px">：</span><span style="font-size:10.3px;letter-spacing:-.3px">0</span></div>
<div class="abs" style="left:747px;top:174.5px;font-size:9.8px;line-height:13px;color:#333">累计完成<span class="c" style="left:2.5px">：</span><span style="font-size:10.3px;letter-spacing:-.3px">0</span></div>

<div class="abs side" style="top:210px;height:31px;background:#f6f6f6"></div>
<div class="abs" style="left:747px;top:216px;font-size:9.8px;line-height:13px;color:#333">最近标注的数据</div>

<!-- mouse pointer -->
<svg class="abs" style="left:332.5px;top:240px" width="13" height="17" viewBox="0 0 13 17">
  <path d="M1 1 L1 13.2 L3.9 10.6 L6.2 15.6 L8 14.8 L5.8 10 L10.2 10 Z" fill="#fff" stroke="#111" stroke-width="1.15" stroke-linejoin="round"/>
</svg>
</body>
</html>
